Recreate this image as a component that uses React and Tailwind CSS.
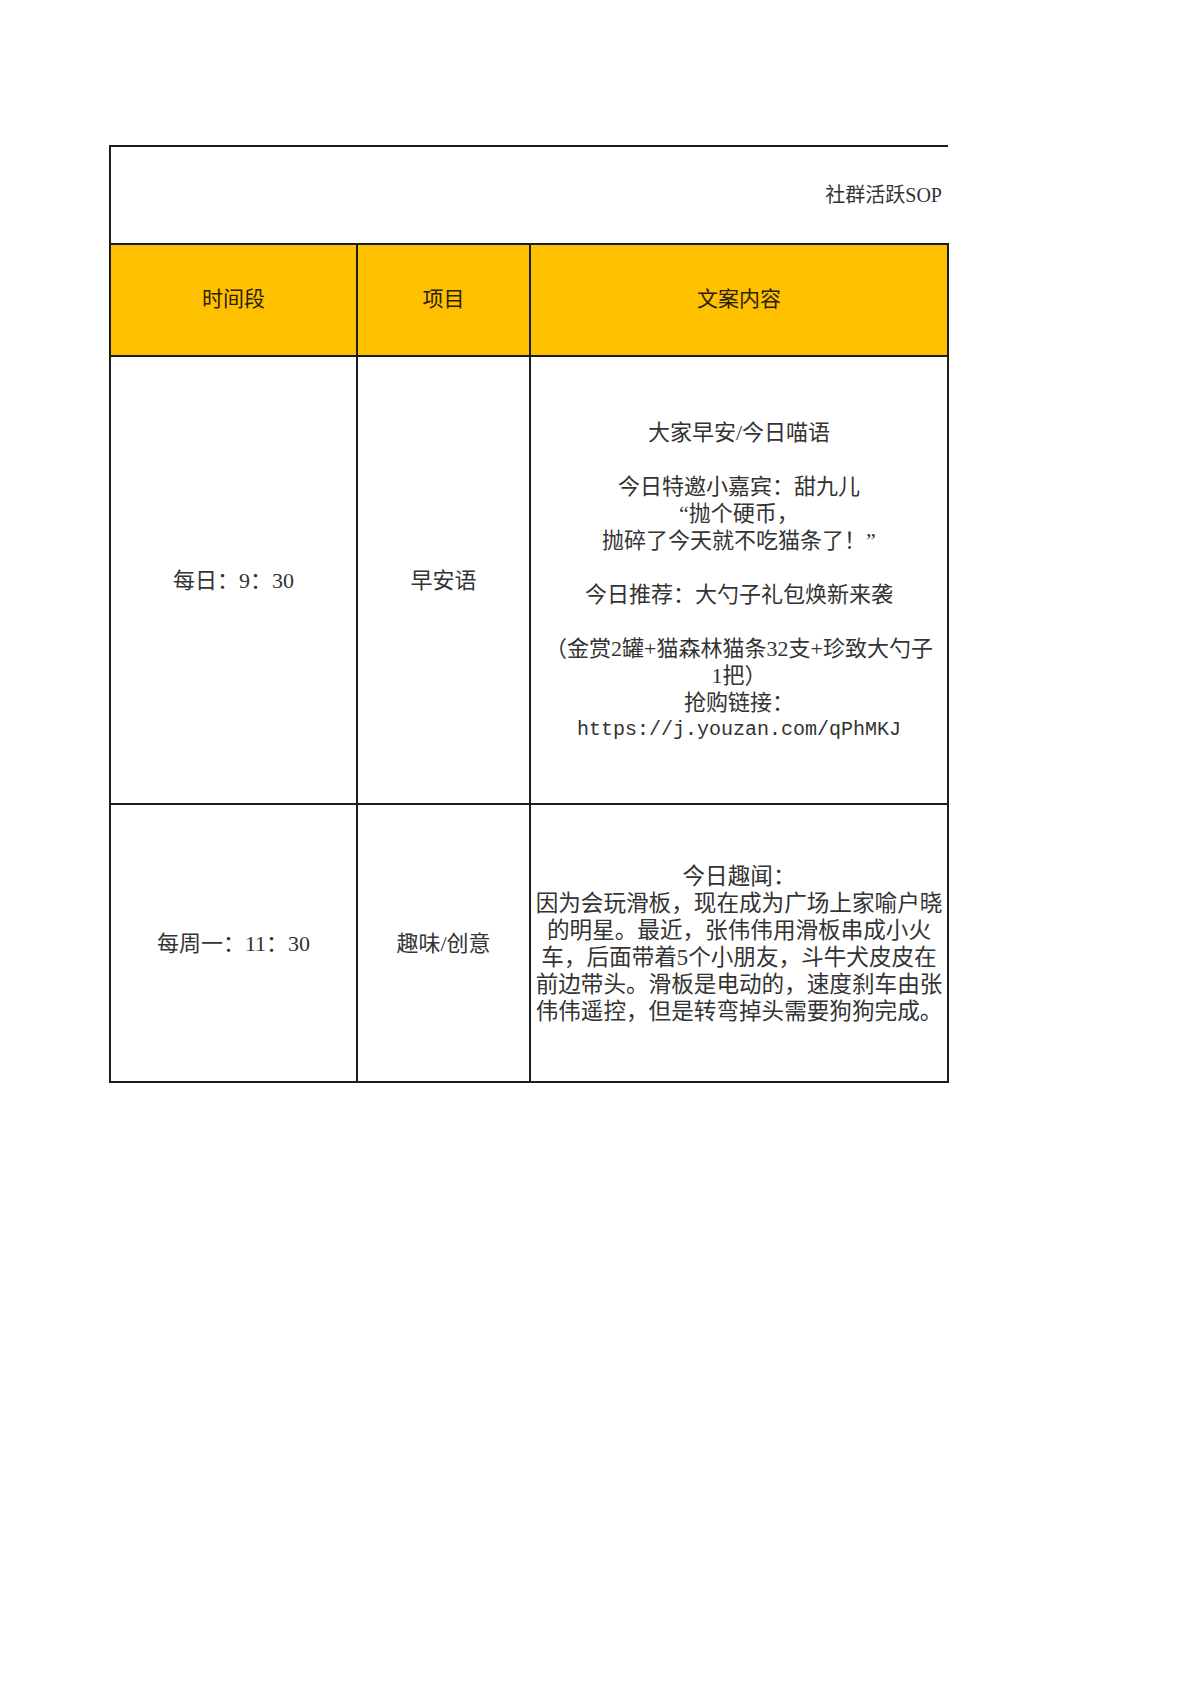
const font = { fontFamily: '"Liberation Serif", "Noto Sans CJK SC", serif' };

const cell = "border-2 border-[#1c1c1c] text-center align-middle";

const SopSheet = () => {
  return (
    <div className="min-h-[1698px] w-[1200px] bg-white pl-[109px] pt-[145px]" style={font}>
      <table className="w-[838px] table-fixed border-collapse text-[#333333]">
        <colgroup>
          <col className="w-[247px]" />
          <col className="w-[173px]" />
          <col className="w-[418px]" />
        </colgroup>
        <tbody>
          <tr className="h-[98px]">
            <td colSpan={3} className="border-t-2 border-l-2 border-[#1c1c1c] pr-[6px] text-right align-middle">
              <span className="text-[20px]">社群活跃SOP</span>
            </td>
          </tr>
          <tr className="h-[112px] bg-[#ffc000]">
            <td className={`${cell} text-[21px] text-[#2a2208]`}>时间段</td>
            <td className={`${cell} text-[21px] text-[#2a2208]`}>项目</td>
            <td className={`${cell} text-[21px] text-[#2a2208]`}>文案内容</td>
          </tr>
          <tr className="h-[448px]">
            <td className={`${cell} text-[22px]`}>每日：9：30</td>
            <td className={`${cell} text-[22px]`}>早安语</td>
            <td className={`${cell} text-[22px] leading-[27px]`}>
              <div className="flex flex-col items-center whitespace-nowrap pt-[2px]">
                <p>大家早安/今日喵语</p>
                <p>&nbsp;</p>
                <p>今日特邀小嘉宾：甜九儿</p>
                <p>“抛个硬币，</p>
                <p>抛碎了今天就不吃猫条了！”</p>
                <p>&nbsp;</p>
                <p>今日推荐：大勺子礼包焕新来袭</p>
                <p>&nbsp;</p>
                <p>（金赏2罐+猫森林猫条32支+珍致大勺子</p>
                <p>1把）</p>
                <p>抢购链接：</p>
                <p className="font-['Liberation_Mono',monospace] text-[20px]">https://j.youzan.com/qPhMKJ</p>
              </div>
            </td>
          </tr>
          <tr className="h-[278px]">
            <td className={`${cell} text-[22px]`}>每周一：11：30</td>
            <td className={`${cell} text-[22px]`}>趣味/创意</td>
            <td className={`${cell} text-[22.6px] leading-[27px]`}>
              <div className="flex flex-col items-center whitespace-nowrap pt-[1px]">
                <p>今日趣闻：</p>
                <p>因为会玩滑板，现在成为广场上家喻户晓</p>
                <p>的明星。最近，张伟伟用滑板串成小火</p>
                <p>车，后面带着5个小朋友，斗牛犬皮皮在</p>
                <p>前边带头。滑板是电动的，速度刹车由张</p>
                <p>伟伟遥控，但是转弯掉头需要狗狗完成。</p>
              </div>
            </td>
          </tr>
        </tbody>
      </table>
    </div>
  );
};

export default function App() {
  return <SopSheet />;
}
